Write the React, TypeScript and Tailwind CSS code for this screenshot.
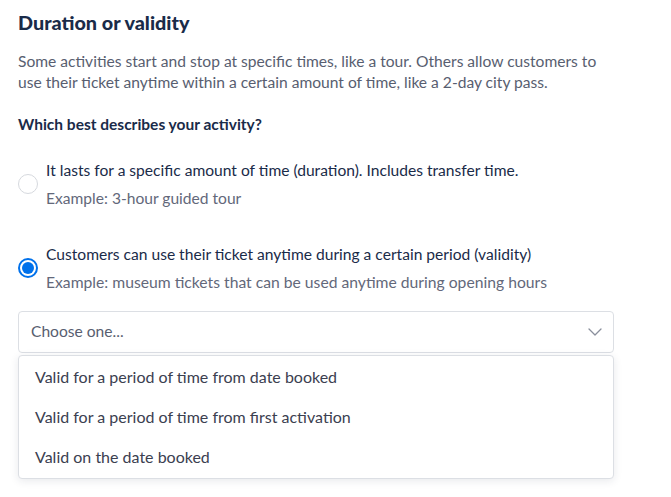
import React from "react";

export default function App() {
  return (
    <div className="w-[671px] h-[497px] bg-white overflow-hidden font-['Lato',sans-serif] text-[#1a2b49]">
      <div className="pl-[18px] pr-[50px] pt-[10px]">
        <h1 className="text-[19.8px] leading-[24px] font-black">Duration or validity</h1>
        <p className="mt-[17px] text-[15.6px] leading-[21px] text-[#585e70]">
          Some activities start and stop at specific times, like a tour. Others allow customers to use their ticket anytime within a certain amount of time, like a 2-day city pass.
        </p>
        <p className="mt-[21px] text-[15.5px] leading-[20px] font-bold">Which best describes your activity?</p>

        <div className="mt-[25px] flex flex-col gap-[34px]">
          <label className="flex items-center gap-[8px]">
            <span className="w-[20px] h-[20px] rounded-full border border-[#d6d9de] bg-white shrink-0" />
            <span className="flex flex-col">
              <span className="text-[15.6px] leading-[22px]">It lasts for a specific amount of time (duration). Includes transfer time.</span>
              <span className="mt-[6px] text-[15.6px] leading-[22px] text-[#63687a]">Example: 3-hour guided tour</span>
            </span>
          </label>
          <label className="flex items-center gap-[8px]">
            <span className="w-[20px] h-[20px] rounded-full border-2 border-[#0071eb] bg-white shrink-0 flex items-center justify-center">
              <span className="w-[12px] h-[12px] rounded-full bg-[#0071eb]" />
            </span>
            <span className="flex flex-col">
              <span className="text-[15.6px] leading-[22px]">Customers can use their ticket anytime during a certain period (validity)</span>
              <span className="mt-[6px] text-[15.7px] leading-[22px] text-[#63687a]">Example: museum tickets that can be used anytime during opening hours</span>
            </span>
          </label>
        </div>

        <div className="mt-[18px] w-[596px]">
          <div className="h-[42px] rounded-[4px] border border-[#dcdfe4] flex items-center justify-between pl-[12px] pr-[10px] text-[15.6px] text-[#585e70]">
            <span>Choose one...</span>
            <svg width="16" height="16" viewBox="0 0 16 16" fill="none" stroke="#8a8f9c" strokeWidth="1.3" strokeLinecap="round" strokeLinejoin="round">
              <path d="M2 5 L8 11 L14 5" />
            </svg>
          </div>
          <div className="mt-[2px] rounded-[4px] border border-[#dcdfe4] shadow-[0_2px_8px_rgba(26,43,73,0.10)] bg-white py-[1px]">
            {[
              "Valid for a period of time from date booked",
              "Valid for a period of time from first activation",
              "Valid on the date booked",
            ].map((t) => (
              <div key={t} className="h-[40px] flex items-center px-[16px] text-[16px] text-[#3b4050]">
                {t}
              </div>
            ))}
          </div>
        </div>
      </div>
    </div>
  );
}
